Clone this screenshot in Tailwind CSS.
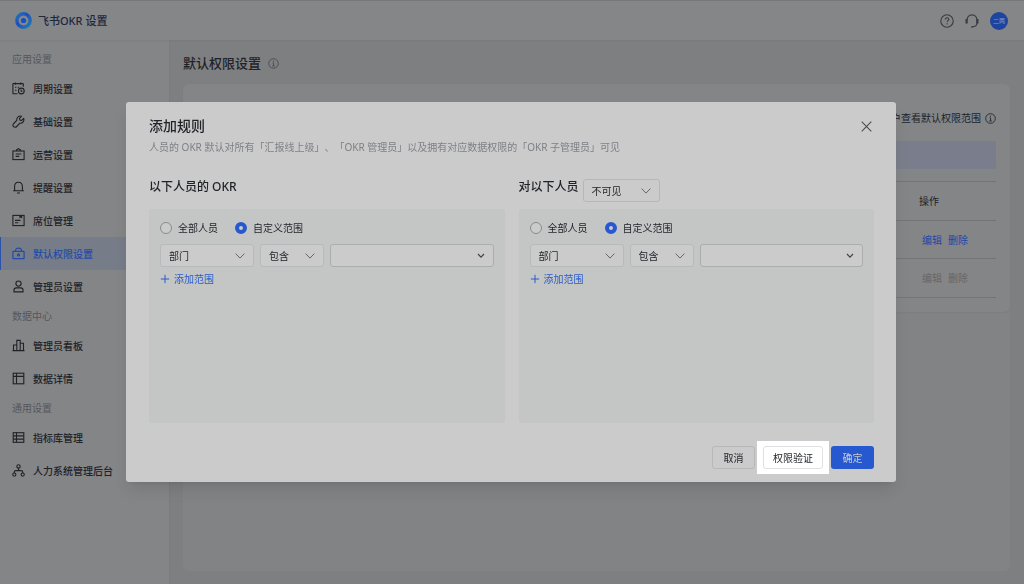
<!DOCTYPE html>
<html lang="zh-CN">
<head>
<meta charset="utf-8">
<meta name="viewport" content="width=device-width, initial-scale=1">
<title>飞书OKR 设置</title>
<script src="https://cdn.jsdelivr.net/npm/@tailwindcss/browser@4"></script>
</head>
<body class="flex min-h-screen flex-col bg-[#7e7f81] font-['Noto_Sans','Noto_Sans_CJK_SC',sans-serif] text-[10px] leading-4 text-[#1f2227]">
<header class="relative z-10 flex h-10 items-center border-t border-[#77787a] bg-[#858688] pr-4 pl-[15px] shadow-xs">
  <svg class="mr-1.5 size-[17px]" viewBox="0 0 17 17" fill="none"><defs><linearGradient id="ring" x1="0" y1="0" x2="1" y2="1"><stop offset="0" stop-color="#2276b8"/><stop offset=".4" stop-color="#1c4fbc"/><stop offset="1" stop-color="#207cae"/></linearGradient></defs><circle cx="8.5" cy="8.5" r="6.7" stroke="url(#ring)" stroke-width="3.4"/><circle cx="8.5" cy="8.5" r="2.6" fill="#1c4fbc"/></svg>
  <h1 class="text-[11px] font-medium text-[#1c2740]">飞书OKR 设置</h1>
  <div class="ml-auto flex items-center gap-[11px]">
    <button type="button" aria-label="帮助"><svg class="size-3.5" viewBox="0 0 14 14" fill="none" stroke="#383b42" stroke-width="1.1"><circle cx="7" cy="7" r="6.2"/><path d="M5.2 5.6c0-1.1.8-1.8 1.8-1.8s1.8.7 1.8 1.6c0 1.2-1.7 1.3-1.7 2.7M7.1 9.2v1.2"/></svg></button>
    <button type="button" aria-label="客服"><svg class="size-3.5" viewBox="0 0 14 14" fill="none" stroke="#383b42" stroke-width="1.1"><path d="M2 6.2C2 3 4 .9 7 .9s5 2.1 5 5.3v2.6c0 2.4-1.4 3.7-3.8 4"/><path d="M1.6 5v4.4M12.4 5v4.4" stroke-width="2.2"/><path d="M6.3 12.9h2" stroke-width="1.5"/></svg></button>
    <button type="button" class="flex size-[18px] items-center justify-center rounded-full bg-[#1d459f] text-[6px] leading-none text-[#8c9cc0]">二两</button>
  </div>
</header>
<div class="flex flex-1">
  <aside class="w-[170px] shrink-0 border-r border-[#7b7c7e] bg-[#848587] pt-[5px]">
    <nav>
      <h2 class="flex h-[27px] items-center pl-3 text-[#54575d]">应用设置</h2>
      <a href="#" class="flex h-[33px] items-center gap-2 pl-3 font-medium"><svg class="size-[13px]" viewBox="0 0 13 13" fill="none" stroke="currentColor" stroke-width="1.1"><path d="M5.4 11.7H1.5a.6.6 0 0 1-.6-.6V2.2c0-.4.2-.6.6-.6h9.2c.4 0 .6.2.6.6v2.5M3.4.5v2.3M8.8.5v2.3M3 5.2h1.4M5.7 5.2h1.4M3 8.2h1.4"/><circle cx="9.3" cy="9" r="2.9"/><path d="M9.1 7.6v1.6h1.4"/></svg>周期设置</a>
      <a href="#" class="flex h-[33px] items-center gap-2 pl-3 font-medium"><svg class="size-[13px]" viewBox="0 0 13 13" fill="none" stroke="currentColor" stroke-width="1.1" stroke-linejoin="round"><path d="M9.6 1.2 7.5 3.4l.4 1.7 1.7.4 2.1-2.1c.8 2.6-.9 5-3.8 4.8L4.7 11.5c-1 1-2.4.9-3.1.1-.8-.8-.8-2.1.1-3.1l3.1-3.1C4.5 2.5 6.9.4 9.6 1.2Z"/></svg>基础设置</a>
      <a href="#" class="flex h-[33px] items-center gap-2 pl-3 font-medium"><svg class="size-[13px]" viewBox="0 0 13 13" fill="none" stroke="currentColor" stroke-width="1.1"><rect x=".9" y="3" width="11.2" height="8.6"/><path d="M4.6 3V1.9l1.9-1.2 1.9 1.2V3M3.7 6h5.6M3.7 8.4h3.5"/></svg>运营设置</a>
      <a href="#" class="flex h-[33px] items-center gap-2 pl-3 font-medium"><svg class="size-[13px]" viewBox="0 0 13 13" fill="none" stroke="currentColor" stroke-width="1.1"><path d="M2.6 9.8V5.5C2.6 3 4.2 1.2 6.5 1.2s3.9 1.8 3.9 4.3v4.3M1.1 9.8h10.8M5 12h3"/></svg>提醒设置</a>
      <a href="#" class="flex h-[33px] items-center gap-2 pl-3 font-medium"><svg class="size-[13px]" viewBox="0 0 13 13" fill="none" stroke="currentColor" stroke-width="1.1"><rect x=".9" y="1.4" width="11.2" height="10.2"/><path d="M3 6.4h5.5M3 8.8h3.3"/><path d="M7.4 1.6h2.8v2.8l-1.4-.8-1.4.8Z" fill="currentColor" stroke="none"/></svg>席位管理</a>
      <a href="#" aria-current="page" class="flex h-[33px] items-center gap-2 border-l border-[#2953ad] bg-[#777c89] pl-[11px] font-medium text-[#254ba8]"><svg class="size-[13px]" viewBox="0 0 13 13" fill="none" stroke="currentColor" stroke-width="1.2"><rect x=".9" y="4.4" width="11.2" height="7.2" rx=".4"/><path d="M3.4 4.3c0-2 1.2-3.2 3.1-3.2s3.1 1.2 3.1 3.2"/><circle cx="6.5" cy="7.9" r="1"/></svg>默认权限设置</a>
      <a href="#" class="flex h-[33px] items-center gap-2 pl-3 font-medium"><svg class="size-[13px]" viewBox="0 0 13 13" fill="none" stroke="currentColor" stroke-width="1.1"><circle cx="6.5" cy="3.6" r="2.6"/><path d="M2 11.9v-1.8c0-1.4.9-2.2 2.2-2.2h4.6c1.3 0 2.2.8 2.2 2.2v1.8Z"/></svg>管理员设置</a>
      <h2 class="flex h-[26px] items-center pl-3 text-[#54575d]">数据中心</h2>
      <a href="#" class="flex h-[33px] items-center gap-2 pl-3 font-medium"><svg class="size-[13px]" viewBox="0 0 13 13" fill="none" stroke="currentColor" stroke-width="1.1"><path d="M.5 11.6h12M1.5 11.5V6h3.3M4.8 11.5V1.4h3.4v10.1M8.2 4.2h3.3v7.3"/></svg>管理员看板</a>
      <a href="#" class="flex h-[33px] items-center gap-2 pl-3 font-medium"><svg class="size-[13px]" viewBox="0 0 13 13" fill="none" stroke="currentColor" stroke-width="1.1"><rect x="1.2" y="1.2" width="10.6" height="10.6"/><path d="M1.2 4.4h10.6M4.5 1.2v10.6"/></svg>数据详情</a>
      <h2 class="flex h-[26px] items-center pl-3 text-[#54575d]">通用设置</h2>
      <a href="#" class="flex h-[33px] items-center gap-2 pl-3 font-medium"><svg class="size-[13px]" viewBox="0 0 13 13" fill="none" stroke="currentColor" stroke-width="1.1"><rect x="1.2" y="1.7" width="10.6" height="9.6"/><path d="M1.2 4.9h10.6M1.2 8.1h10.6M4.5 1.7v9.6"/></svg>指标库管理</a>
      <a href="#" class="flex h-[33px] items-center gap-2 pl-3 font-medium"><svg class="size-[13px]" viewBox="0 0 13 13" fill="none" stroke="currentColor" stroke-width="1.1"><circle cx="6.5" cy="2.4" r="1.7"/><circle cx="2.3" cy="10.6" r="1.6"/><circle cx="10.7" cy="10.6" r="1.6"/><path d="M6.5 4.1v2.5M2.3 9V8c0-.8.6-1.4 1.4-1.4h5.6c.8 0 1.4.6 1.4 1.4v1"/></svg>人力系统管理后台</a>
    </nav>
  </aside>
  <main class="flex flex-1 flex-col pt-[13px] pr-3.5 pb-[13px] pl-[13px]">
    <div class="mb-[11px] flex h-5 items-center gap-[7px]">
      <h2 class="text-[13px] font-medium">默认权限设置</h2>
      <svg class="size-[11px]" viewBox="0 0 11 11" fill="none" stroke="#4c5057"><circle cx="5.5" cy="5.5" r="4.8"/><path d="M5.5 2.6v1.2M4.6 4.9h1v3M4.2 8h2.6"/></svg>
    </div>
    <div class="flex-1 rounded-md bg-[#828385]">
      <section class="rounded-md bg-[#848587] px-3.5 pt-[25px] pb-3.5 shadow-xs">
        <p class="flex h-[18px] items-center justify-end gap-1">用户查看默认权限范围<svg class="size-[11px]" viewBox="0 0 11 11" fill="none" stroke="#2d3036"><circle cx="5.5" cy="5.5" r="4.8"/><path d="M5.5 2.6v1.2M4.6 4.9h1v3M4.2 8h2.6"/></svg></p>
        <div class="mt-3.5 h-7 rounded-xs bg-[#7a7e8c]"></div>
        <table class="mt-3 w-full border-t border-[#737476]">
          <thead><tr class="h-[39px] border-b border-[#737476]"><td></td><th scope="col" class="w-[77px] text-left font-normal">操作</th></tr></thead>
          <tbody>
            <tr class="h-[38px] border-b border-[#737476]"><td></td><td class="pl-[3px]"><div class="flex gap-1.5 text-[#2048a4]"><a href="#">编辑</a><a href="#">删除</a></div></td></tr>
            <tr class="h-[39px] border-b border-[#737476]"><td></td><td class="pl-[3px]"><div class="flex gap-1.5 text-[#646568]"><button type="button" disabled>编辑</button><button type="button" disabled>删除</button></div></td></tr>
          </tbody>
        </table>
      </section>
    </div>
  </main>
</div>

<!-- Modal layer -->
<div class="fixed inset-0 z-20 flex items-center justify-center pr-0.5">
  <div role="dialog" aria-modal="true" aria-labelledby="dialog-title" class="w-[770px] max-w-full rounded-[3px] bg-[#cbcbcb] pt-3.5 pr-[22px] pb-2 pl-[23px] shadow-lg">
    <div class="flex h-5 items-center justify-between">
      <h2 id="dialog-title" class="text-sm font-medium">添加规则</h2>
      <button type="button" aria-label="关闭" class="mr-0.5"><svg class="size-[11px]" viewBox="0 0 11 11" stroke="#4a4d52" stroke-width="1.1"><path d="m.7.7 9.6 9.6M10.3.7.7 10.3"/></svg></button>
    </div>
    <p class="mt-[3px] text-[#7d8086] [text-spacing-trim:space-all]">人员的 OKR 默认对所有「汇报线上级」、「OKR 管理员」以及拥有对应数据权限的「OKR 子管理员」可见</p>
    <div class="mt-5 grid grid-cols-2 gap-3.5">
      <section>
        <div class="mb-0.5 flex h-8 pt-1"><h3 class="text-xs/4 font-medium">以下人员的 OKR</h3></div>
        <fieldset class="h-[214px] rounded-[3px] bg-[#c4c6c5] px-[11px] pt-[11px]">
          <div class="flex gap-[17px]">
            <label class="flex items-center gap-1.5"><input type="radio" name="owner" class="size-3 appearance-none rounded-full border border-[#888c91] bg-[#cbcbcb] checked:border-4 checked:border-[#2659cf]">全部人员</label>
            <label class="flex items-center gap-1.5"><input type="radio" name="owner" checked class="size-3 appearance-none rounded-full border border-[#888c91] bg-[#cbcbcb] checked:border-4 checked:border-[#2659cf]">自定义范围</label>
          </div>
          <div class="mt-2 flex gap-1.5">
            <div class="relative w-[94px]"><select aria-label="范围类型" class="h-[23px] w-full appearance-none rounded-[3px] border border-[#b7b9ba] bg-[#cbcbcb] pl-2"><option>部门</option></select><svg class="pointer-events-none absolute top-[9px] right-[9px] h-1.5 w-2.5" viewBox="0 0 10 6" fill="none" stroke="#62666b"><path d="m.6.6 4.4 4.5L9.4.6"/></svg></div>
            <div class="relative w-16"><select aria-label="条件" class="h-[23px] w-full appearance-none rounded-[3px] border border-[#b7b9ba] bg-[#cbcbcb] pl-2"><option>包含</option></select><svg class="pointer-events-none absolute top-[9px] right-[9px] h-1.5 w-2.5" viewBox="0 0 10 6" fill="none" stroke="#62666b"><path d="m.6.6 4.4 4.5L9.4.6"/></svg></div>
            <div class="relative flex-1"><select aria-label="范围值" class="h-[23px] w-full appearance-none rounded-[3px] border border-[#a9adab] bg-[#cbcbcb] pl-2"><option></option></select><svg class="pointer-events-none absolute top-[9px] right-[9px] h-1.5 w-2" viewBox="0 0 8 6" fill="none" stroke="#3f4348" stroke-width="1.2"><path d="m1 1 3 3.2L7 1"/></svg></div>
          </div>
          <button type="button" class="mt-1 flex items-center gap-1 text-[#2a5bcb]"><svg class="size-2.5" viewBox="0 0 10 10" stroke="currentColor"><path d="M5 .8v8.4M.8 5h8.4"/></svg>添加范围</button>
        </fieldset>
      </section>
      <section>
        <div class="mb-0.5 flex h-8 gap-1 pt-1"><h3 class="text-xs/4 font-medium">对以下人员</h3>
          <div class="w-[77px]"><div class="relative"><select aria-label="可见性" class="h-[23px] w-full appearance-none rounded-[3px] border border-[#b5b7b9] bg-[#cbcbcb] pl-2"><option>不可见</option></select><svg class="pointer-events-none absolute top-[9px] right-[9px] h-1.5 w-2.5" viewBox="0 0 10 6" fill="none" stroke="#62666b"><path d="m.6.6 4.4 4.5L9.4.6"/></svg></div></div>
        </div>
        <fieldset class="h-[214px] rounded-[3px] bg-[#c4c6c5] px-[11px] pt-[11px]">
          <div class="flex gap-[17px]">
            <label class="flex items-center gap-1.5"><input type="radio" name="viewer" class="size-3 appearance-none rounded-full border border-[#888c91] bg-[#cbcbcb] checked:border-4 checked:border-[#2659cf]">全部人员</label>
            <label class="flex items-center gap-1.5"><input type="radio" name="viewer" checked class="size-3 appearance-none rounded-full border border-[#888c91] bg-[#cbcbcb] checked:border-4 checked:border-[#2659cf]">自定义范围</label>
          </div>
          <div class="mt-2 flex gap-1.5">
            <div class="relative w-[94px]"><select aria-label="范围类型" class="h-[23px] w-full appearance-none rounded-[3px] border border-[#b7b9ba] bg-[#cbcbcb] pl-2"><option>部门</option></select><svg class="pointer-events-none absolute top-[9px] right-[9px] h-1.5 w-2.5" viewBox="0 0 10 6" fill="none" stroke="#62666b"><path d="m.6.6 4.4 4.5L9.4.6"/></svg></div>
            <div class="relative w-16"><select aria-label="条件" class="h-[23px] w-full appearance-none rounded-[3px] border border-[#b7b9ba] bg-[#cbcbcb] pl-2"><option>包含</option></select><svg class="pointer-events-none absolute top-[9px] right-[9px] h-1.5 w-2.5" viewBox="0 0 10 6" fill="none" stroke="#62666b"><path d="m.6.6 4.4 4.5L9.4.6"/></svg></div>
            <div class="relative flex-1"><select aria-label="范围值" class="h-[23px] w-full appearance-none rounded-[3px] border border-[#a9adab] bg-[#cbcbcb] pl-2"><option></option></select><svg class="pointer-events-none absolute top-[9px] right-[9px] h-1.5 w-2" viewBox="0 0 8 6" fill="none" stroke="#3f4348" stroke-width="1.2"><path d="m1 1 3 3.2L7 1"/></svg></div>
          </div>
          <button type="button" class="mt-1 flex items-center gap-1 text-[#2a5bcb]"><svg class="size-2.5" viewBox="0 0 10 10" stroke="currentColor"><path d="M5 .8v8.4M.8 5h8.4"/></svg>添加范围</button>
        </fieldset>
      </section>
    </div>
    <div class="mt-[18px] flex items-center justify-end gap-0.5">
      <button type="button" class="h-[23px] w-[43px] rounded-[3px] border border-[#b6b8ba]">取消</button>
      <div class="bg-white px-1.5 py-[5px]"><button type="button" class="block h-[23px] w-[60px] rounded-[3px] border border-[#dee0e3]">权限验证</button></div>
      <button type="button" class="h-[23px] w-[43px] rounded-[3px] bg-[#2659cf] text-[#cbcbcb]">确定</button>
    </div>
  </div>
</div>
</body>
</html>
